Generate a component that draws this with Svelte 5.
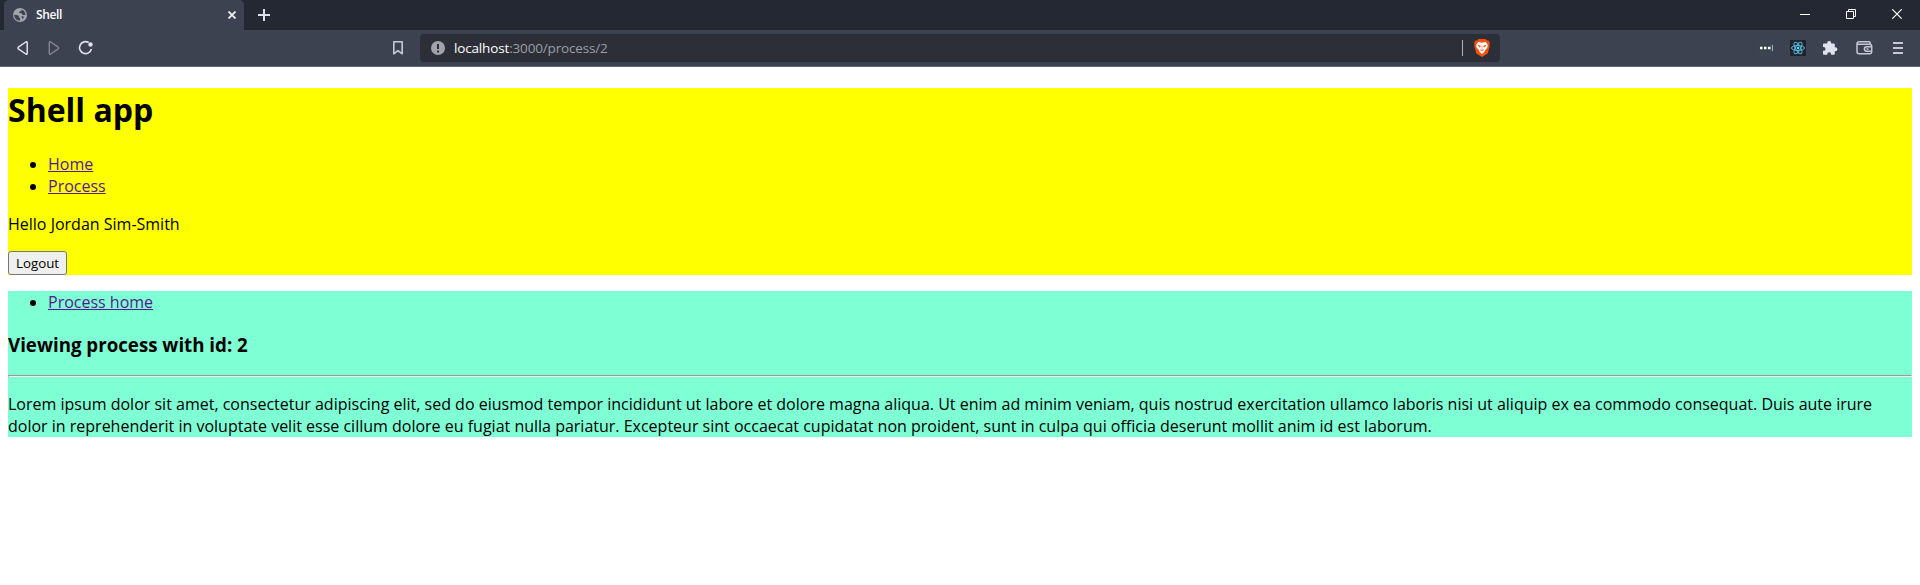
<script>
  const links = ['Home', 'Process'];
  const userName = 'Jordan Sim-Smith';
  const processId = 2;
</script>

<div class="browser">
  <div class="tabs">
    <div class="tab">
      <svg class="globe" width="14" height="14" viewBox="0 0 14 14">
        <circle cx="7" cy="7" r="7" fill="#9fa4ad" />
        <path d="M1.2 6.7 4 6.9 5.8 8v1.4l1.3.6v2.6C3.7 12.7 1.3 10.2 1.2 6.7zM8.7 1.5 8.5 3 6.4 3.5 6 5l2.6.3 1 1.7 2.9-.1C12.4 4.2 10.8 2.2 8.7 1.5zM8.3 8.3h1.9l.8 1.2-1.6 1.6z" fill="#3d4251" />
      </svg>
      <span class="title">Shell</span>
      <svg class="close" width="8" height="8" viewBox="0 0 8 8"><path d="M.5.5l7 7M7.5.5l-7 7" stroke="#eef0f5" stroke-width="1.8" /></svg>
    </div>
    <svg class="plus" width="12" height="12" viewBox="0 0 12 12"><path d="M6 0v12M0 6h12" stroke="#dfe2ed" stroke-width="2" /></svg>
    <div class="window">
      <svg width="10" height="10" viewBox="0 0 10 10"><path d="M0 5.5h10" stroke="#fff" /></svg>
      <svg width="10" height="10" viewBox="0 0 10 10" fill="none" stroke="#fff"><path d="M.5 2.5h7v7h-7zM2.5 2.5v-2h7v7h-2" /></svg>
      <svg width="10" height="10" viewBox="0 0 10 10"><path d="M.3.3l9.4 9.4M9.7.3.3 9.7" stroke="#fff" stroke-width="1.2" /></svg>
    </div>
  </div>
  <div class="toolbar">
    <div class="nav">
      <svg width="14" height="16" viewBox="0 0 14 16" fill="none" stroke="#dfe2ed" stroke-width="1.5" stroke-linejoin="round"><path d="M2.3 7.2 9.8 2Q11.2 1.4 11.2 2.8v10.4Q11.2 14.6 9.8 14L2.3 8.8Q1.5 8 2.3 7.2z" /></svg>
      <svg width="14" height="16" viewBox="0 0 14 16" fill="none" stroke="#828693" stroke-width="1.4" stroke-linejoin="round"><path d="M11.2 7.2 3.7 2Q2.3 1.4 2.3 2.8v10.4Q2.3 14.6 3.7 14l7.5-5.2Q12 8 11.2 7.2z" /></svg>
      <svg width="16" height="16" viewBox="0 0 16 16"><path d="M10.700 2.500A6 6 0 1 0 13.400 9" fill="none" stroke="#dfe2ed" stroke-width="1.600" /><circle cx="12.500" cy="4.500" r="2.200" fill="#dfe2ed" /></svg>
    </div>
    <svg class="bookmark" width="10" height="14" viewBox="0 0 10 14"><path d="M.8.8h8.400v12L5 9.600.8 12.800z" fill="none" stroke="#c5c9d6" stroke-width="1.600" stroke-linejoin="round" /></svg>
    <div class="address">
      <svg class="info" width="14" height="14" viewBox="0 0 14 14"><circle cx="7" cy="7" r="7" fill="#a0a3aa" /><path d="M7 3v5M7 9.500v2" stroke="#2d2f38" stroke-width="2" /></svg>
      <span class="url"><b>localhost</b>:3000/process/2</span>
      <span class="separator"></span>
      <svg class="shield" width="16" height="18" viewBox="0 0 16 18">
        <path d="M4.600 0h6.800l1.300 1.500 1.700-.1L16 4l-.6 1.600.3 1.400-2.100 7.600L8 18l-5.600-3.400L.3 7l.3-1.400L0 4l1.600-2.600 1.700.1z" fill="#f9500f" />
        <path d="M4.300 3 8 3.700l3.700-.7 2.100 3-.5 2.700-2.100 2.200-.7 1.800L8 14.900l-2.500-2.200-.7-1.800-2.100-2.200L2.200 6z" fill="#fff" />
        <path d="M3.700 6.100 6.600 7l-.7 1.200zM12.300 6.100 9.400 7l.7 1.200zM8 7v3M6 10.800l2 1 2-1" fill="#f9500f" stroke="#f9500f" stroke-width=".5" />
      </svg>
    </div>
    <div class="extensions">
      <svg width="16" height="16" viewBox="0 0 16 16"><rect width="16" height="16" rx="1.500" fill="#39464f" /><path d="M2 6.700h2.500v2.600H2zM6 6.700h2.500v2.600H6zM10 6.700h2.500v2.600H10z" fill="#fff" /><path d="M14.400 5v6" stroke="#b2b8bf" /></svg>
      <svg width="16" height="16" viewBox="0 0 16 16"><path d="M0 0h16v16H0z" fill="#20232a" /><g fill="none" stroke="#53b9dc"><ellipse cx="8" cy="8" rx="6.500" ry="2.500" /><ellipse cx="8" cy="8" rx="6.500" ry="2.500" transform="rotate(60 8 8)" /><ellipse cx="8" cy="8" rx="6.500" ry="2.500" transform="rotate(120 8 8)" /></g><circle cx="8" cy="8" r="1.300" fill="#61dafb" /></svg>
      <svg width="16" height="16" viewBox="0 0 16 16"><path d="M2 3.500h3.200V3a2 2 0 0 1 4 0v.5h2.600q1 0 1 1v2.700h.6a2 2 0 0 1 0 4h-.6v2.500q0 1-1 1H9.100v-.6a1.900 1.900 0 0 0-3.800 0v.6H2q-1 0-1-1v-2.900h.6a1.900 1.900 0 0 0 0-3.800H1V4.500q0-1 1-1z" fill="#dfe2ed" /></svg>
      <svg class="wallet" width="17" height="16" viewBox="0 0 17 16" fill="none" stroke="#c3c7d3" stroke-width="1.500"><path d="M14.200 4.300V3q0-1.200-1.200-1.200H3Q1.200 1.800 1 3.300v8.500q0 2 2 2h11q1.700 0 1.700-1.700V6q0-1.700-1.700-1.700H3Q1.500 4.300 1 3.200M15.700 6.700h-5a2.300 2.300 0 0 0 0 4.600h5" /><path d="M10.500 9h2" /></svg>
      <svg class="menu" width="10" height="16" viewBox="0 0 10 16"><path d="M0 3h10M0 8h10M0 13h10" stroke="#c3c7d3" stroke-width="1.800" /></svg>
    </div>
  </div>
</div>

<main>
  <section class="shell">
    <h1>Shell app</h1>
    <ul>
      {#each links as link}
        <li><a href="#/">{link}</a></li>
      {/each}
    </ul>
    <p>Hello {userName}</p>
    <button>Logout</button>
  </section>
  <section class="process">
    <ul><li><a href="#/">Process home</a></li></ul>
    <h3>Viewing process with id: {processId}</h3>
    <hr />
    <p>Lorem ipsum dolor sit amet, consectetur adipiscing elit, sed do eiusmod tempor incididunt ut labore et dolore magna aliqua. Ut enim ad minim veniam, quis nostrud exercitation ullamco laboris nisi ut aliquip ex ea commodo consequat. Duis aute irure dolor in reprehenderit in voluptate velit esse cillum dolore eu fugiat nulla pariatur. Excepteur sint occaecat cupidatat non proident, sunt in culpa qui officia deserunt mollit anim id est laborum.</p>
  </section>
</main>

<style>
  :global(body) { margin: 0; background: #fff; }
  svg { display: block; flex: none; }
  .browser { height: 67px; font-family: "Open Sans", sans-serif; }
  .tabs { height: 30px; display: flex; align-items: flex-start; background: #242832; padding-left: 4px; }
  .tab { box-sizing: border-box; width: 240px; height: 30px; padding: 0 8px 0 9px; display: flex; align-items: center; background: #3d4251; border-radius: 5px 5px 0 0; }
  .title { flex: 1; margin-left: 9px; color: #fff; font-size: 12px; font-weight: 600; line-height: 16px; letter-spacing: -.4px; }
  .plus { margin: 9px 0 0 14px; }
  .window { display: flex; gap: 36px; margin: 9px 18px 0 auto; }
  .toolbar { box-sizing: border-box; height: 37px; display: flex; align-items: center; background: #3d4251; border-bottom: 1px solid #5f6474; }
  .nav { display: flex; gap: 17px; margin-left: 16px; width: 377px; }
  .address { box-sizing: border-box; width: 1080px; height: 28px; margin-left: 17px; padding: 0 10px 0 11px; display: flex; align-items: center; background: #2d2f38; border-radius: 4px; }
  .url { flex: 1; margin-left: 9px; font-size: 13.5px; letter-spacing: -.16px; line-height: 18px; color: #9b9da4; }
  .url b { font-weight: 400; color: #fff; }
  .separator { width: 1px; height: 16px; margin-right: 11px; background: #b1b3b9; }
  .extensions { margin: 0 17px 0 auto; display: flex; align-items: center; gap: 16px; }
  .wallet { margin-left: 2px; }
  .menu { margin-left: 4px; }
  main { padding: 21px 8px 0; font: 400 16px/22px "Open Sans", sans-serif; color: #000; }
  .shell { background: #ff0; height: 187px; }
  .process { background: #7fffd4; margin-top: 16px; height: 146px; }
  h1 { margin: 0 0 21px; font-size: 32px; line-height: 44px; font-weight: 700; }
  ul { margin: 0 0 16px; padding-left: 40px; }
  a { color: #551a8b; }
  .shell p { margin: 0 0 16px; }
  button { box-sizing: border-box; display: block; width: 59px; height: 24px; padding: 0; font: 400 13.333px "Open Sans", sans-serif; color: #000; background: #efefef; border: 1px solid #767676; border-radius: 3px; }
  .process ul { margin-bottom: 19px; }
  h3 { margin: 0; font-size: 18.72px; line-height: 26px; font-weight: 700; }
  hr { margin: 17px 0 16px; border: 1px solid; border-color: #9a9a9a #eee #eee #9a9a9a; }
  .process p { margin: 0; }
</style>
